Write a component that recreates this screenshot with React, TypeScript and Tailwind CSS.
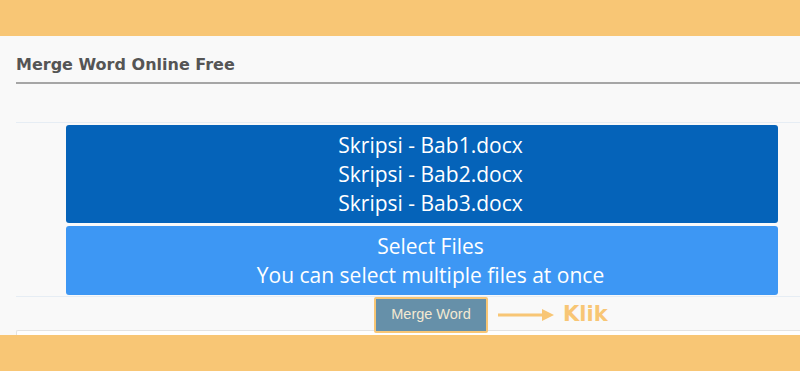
const files = ['Skripsi - Bab1.docx', 'Skripsi - Bab2.docx', 'Skripsi - Bab3.docx'];

export default function App() {
  return (
    <div className="flex h-[371px] w-[800px] flex-col overflow-hidden bg-[#f8c675]">
      <div className="h-[36px] shrink-0 bg-[#f8c675]" />

      <div className="flex h-[299px] shrink-0 flex-col bg-[#f9f9f9] pl-4">
        {/* heading */}
        <div className="flex h-[48px] shrink-0 items-end border-b-2 border-[#a6a6a6] pb-[7px]">
          <h1 className="font-['DejaVu_Sans',sans-serif] text-[16px] font-bold leading-5 text-[#555555]">
            Merge Word Online Free
          </h1>
        </div>

        <div className="h-[39px] shrink-0 border-b border-[#e6edf4]" />

        {/* upload area */}
        <div className="flex shrink-0 flex-col gap-[3px] border-b border-[#e6edf4] pt-[2px] pb-px pl-[50px] pr-[22px] font-['Open_Sans','Noto_Sans',sans-serif] text-white">
          <div className="flex h-[98px] flex-col items-center justify-center rounded-[3px] bg-[#0563b9] pl-[17px] text-[21px] leading-[29px]">
            {files.map((f) => (
              <div key={f}>{f}</div>
            ))}
          </div>
          <div className="flex h-[69px] flex-col items-center justify-center rounded-[3px] bg-[#3d97f4] pl-[17px] text-[21px] leading-[29px]">
            <div>Select Files</div>
            <div>You can select multiple files at once</div>
          </div>
        </div>

        {/* action row */}
        <div className="flex h-[33px] shrink-0 items-start">
          <div className="relative z-10 ml-[358px] flex items-center">
            <button className="flex h-[36px] w-[114px] items-center justify-center rounded-[2px] border-2 border-[#f8c675] bg-[#6690a9] font-['Liberation_Sans',sans-serif] text-[14.5px] text-[#f3e9d2]">
              Merge Word
            </button>
            <svg width="58" height="12" viewBox="0 0 58 12" className="ml-[10px]">
              <line x1="0" y1="6" x2="46" y2="6" stroke="#f8c675" strokeWidth="3" />
              <polygon points="44,0 56,6 44,12" fill="#f8c675" />
            </svg>
            <span className="ml-[7px] font-['DejaVu_Sans',sans-serif] text-[21px] font-bold text-[#f8c675]">
              Klik
            </span>
          </div>
        </div>
        <div className="flex-1 rounded-tl-[2px] border-t border-l border-[#e3e3e3] bg-white" />
      </div>
    </div>
  );
}
